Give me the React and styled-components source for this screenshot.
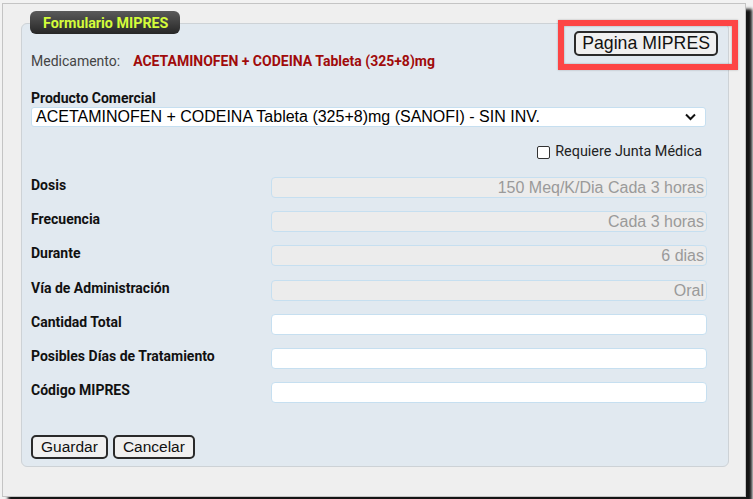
import React from "react";
import styled, { createGlobalStyle } from "styled-components";

const Global = createGlobalStyle`
  html, body { margin: 0; padding: 0; background: #f2f2f2; }
  body { font-family: Roboto, "Liberation Sans", Arial, sans-serif; overflow: hidden; }
  * { box-sizing: border-box; }
`;

const Page = styled.div`
  width: 753px;
  height: 499px;
  padding: 3px 0 0 2px;
  overflow: hidden;
`;

const Dialog = styled.div`
  width: 744px;
  height: 494px;
  background: #efefef;
  border: 1px solid #c4c4c4;
  box-shadow: 6px 6px 3px #151515;
  padding: 7px 16px 0 18px;
  display: flex;
  flex-direction: column;
`;

const Legend = styled.div`
  align-self: flex-start;
  margin-left: 9px;
  margin-bottom: -11px;
  position: relative;
  z-index: 1;
  height: 23px;
  padding: 0 12px 0 13px;
  display: flex;
  align-items: center;
  border-radius: 6px;
  background: linear-gradient(#5a5a5a, #262626);
  color: #d4fc3a;
  font-weight: 700;
  font-size: 14.3px;
`;

const Fieldset = styled.div`
  width: 708px;
  height: 444px;
  background: #e1e9f0;
  border: 1px solid #cdd2d6;
  border-radius: 6px;
  padding: 7px 22px 0 9px;
  display: flex;
  flex-direction: column;
`;

const Header = styled.div`
  display: flex;
  justify-content: space-between;
  align-items: flex-start;
  height: 38px;
`;

const MedLine = styled.div`
  margin-top: 22px;
  font-size: 14px;
  line-height: 16px;
  color: #444;
  display: flex;
  gap: 13px;
`;

const MedValue = styled.span`
  color: #a00b0b;
  font-weight: 700;
`;

const Highlight = styled.div`
  position: relative;
  display: flex;
  margin-right: -12px;
`;

const RedBox = styled.div`
  position: absolute;
  left: -16px;
  right: -20px;
  top: -11px;
  bottom: -14px;
  border: 6px solid #fd4545;
  box-shadow: inset 0 0 2px rgba(0,0,0,0.35), 0 0 2px rgba(0,0,0,0.25);
  pointer-events: none;
`;

const Btn = styled.button`
  font-family: "Liberation Sans", Arial, sans-serif;
  font-size: ${p => p.$big ? "17.7px" : "15.5px"};
  height: ${p => p.$big ? "25px" : "24px"};
  padding: 0 ${p => p.$big ? "6px" : "8px"};
  background: #f0f0f0;
  color: #111;
  border: 2px solid #2a2a2a;
  border-radius: 5px;
  line-height: 1;
  margin: 0;
`;

const FieldLabel = styled.div`
  font-weight: 700;
  font-size: 14px;
  line-height: 18px;
  color: #111;
  margin-top: 20px;
`;

const SelectBox = styled.div`
  height: 20px;
  background: #fff;
  border: 1px solid #c6dff0;
  border-radius: 3px;
  display: flex;
  align-items: center;
  justify-content: space-between;
  padding: 0 9px 0 4px;
  font-family: "Liberation Sans", Arial, sans-serif;
  font-size: 16px;
  color: #000;
`;

const CheckRow = styled.label`
  align-self: flex-end;
  margin-top: 17px;
  margin-right: 4px;
  height: 16px;
  line-height: 16px;
  display: flex;
  align-items: center;
  gap: 5px;
  font-size: 14.4px;
  color: #222;
`;

const Box = styled.span`
  width: 13px;
  height: 13px;
  border: 1px solid #333;
  border-radius: 2px;
  background: #fff;
`;

const Rows = styled.div`
  margin-top: 17px;
  display: flex;
  flex-direction: column;
  gap: 13.2px;
`;

const Row = styled.div`
  display: flex;
  align-items: flex-start;
  justify-content: space-between;
  height: 21px;
`;

const RowLabel = styled.div`
  font-weight: 700;
  font-size: 14px;
  line-height: 17px;
  color: #111;
`;

const Input = styled.div`
  width: 436px;
  height: 21px;
  margin-right: -1px;
  border: 1px solid #c6dff0;
  border-radius: 4px;
  background: ${p => p.$disabled ? "#ececec" : "#fff"};
  color: #9a9a9a;
  font-family: "Liberation Sans", Arial, sans-serif;
  font-size: 16px;
  line-height: 19px;
  text-align: right;
  padding: 0 2px;
`;

const Actions = styled.div`
  margin-top: 32px;
  display: flex;
  gap: 5px;
`;

const rows = [
  ["Dosis", "150 Meq/K/Dia Cada 3 horas", true],
  ["Frecuencia", "Cada 3 horas", true],
  ["Durante", "6 dias", true],
  ["Vía de Administración", "Oral", true],
  ["Cantidad Total", "", false],
  ["Posibles Días de Tratamiento", "", false],
  ["Código MIPRES", "", false],
];

export default function App() {
  return (
    <Page>
      <Global />
      <Dialog>
        <Legend>Formulario MIPRES</Legend>
        <Fieldset>
          <Header>
            <MedLine>
              <span>Medicamento:</span>
              <MedValue>ACETAMINOFEN + CODEINA Tableta (325+8)mg</MedValue>
            </MedLine>
            <Highlight>
              <Btn $big>Pagina MIPRES</Btn>
              <RedBox />
            </Highlight>
          </Header>
          <FieldLabel>Producto Comercial</FieldLabel>
          <SelectBox>
            <span>ACETAMINOFEN + CODEINA Tableta (325+8)mg (SANOFI) - SIN INV.</span>
            <svg width="11" height="8" viewBox="0 0 11 8">
              <path d="M1 1.5 L5.5 6 L10 1.5" fill="none" stroke="#111" strokeWidth="2" />
            </svg>
          </SelectBox>
          <CheckRow>
            <Box />
            Requiere Junta Médica
          </CheckRow>
          <Rows>
            {rows.map(([l, v, d]) => (
              <Row key={l}>
                <RowLabel>{l}</RowLabel>
                <Input $disabled={d}>{v}</Input>
              </Row>
            ))}
          </Rows>
          <Actions>
            <Btn>Guardar</Btn>
            <Btn>Cancelar</Btn>
          </Actions>
        </Fieldset>
      </Dialog>
    </Page>
  );
}
